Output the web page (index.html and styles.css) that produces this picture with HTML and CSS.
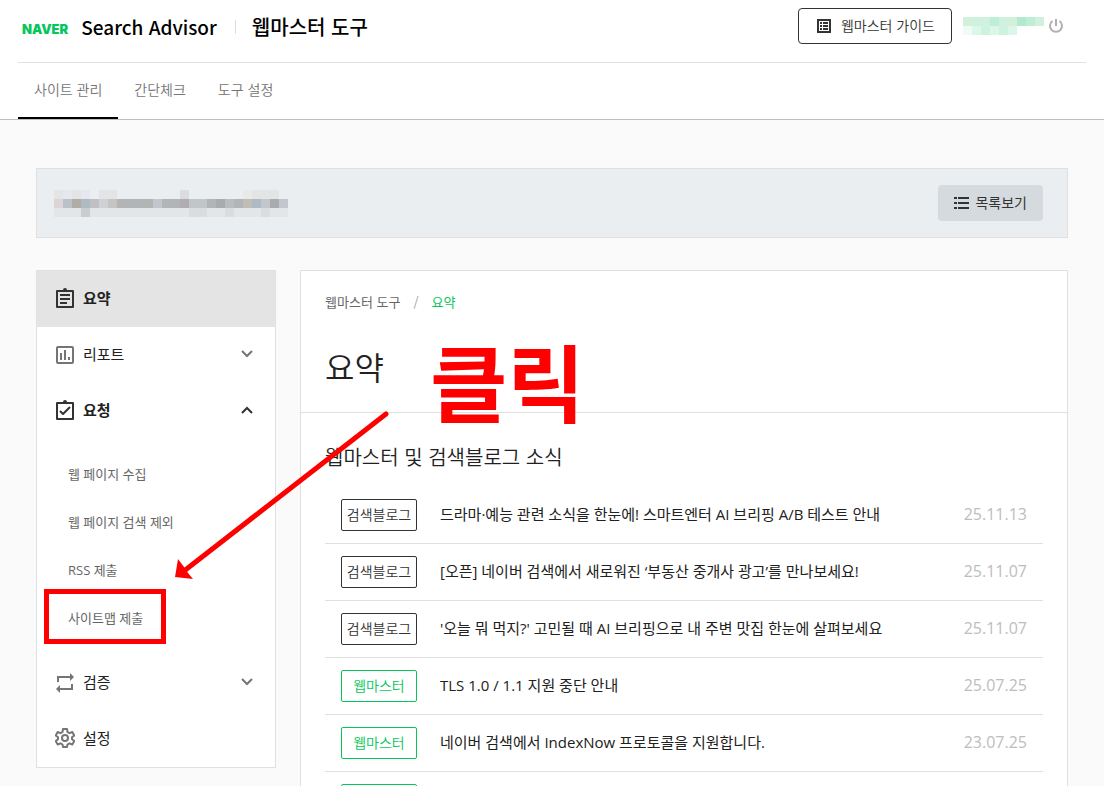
FILE: index.html
```html
<!DOCTYPE html>
<html lang="ko">
<head>
    <meta charset="UTF-8">
    <meta name="viewport" content="width=device-width, initial-scale=1.0">
    <title>네이버 서치어드바이저</title>
    <link rel="stylesheet" href="styles.css">
</head>
<body>
    <header class="header">
        <div class="header-top">
            <a class="brand" href="#">
                <span class="brand-naver">NAVER</span>
                <span class="brand-name">Search Advisor</span>
            </a>
            <a class="brand-sub" href="#">웹마스터 도구</a>
            <div class="header-right">
                <a class="guide-btn" href="#">
                    <svg width="14" height="14" viewBox="0 0 14 14">
                        <path fill="currentColor" fill-rule="evenodd" d="M0 0h14v14H0zM2 2v10h10V2zM3 3h2v2H3zM6 3h5v2H6zM3 6h2v2H3zM6 6h5v2H6zM3 9h2v2H3zM6 9h5v2H6z"/>
                    </svg>
                    <span>웹마스터 가이드</span>
                </a>
                <svg class="user" width="81" height="18" viewBox="0 0 9 2" shape-rendering="crispEdges">
                    <path fill="#cff1de" d="M0 0h9v1H0z"/>
                    <path fill="#c0edd5" d="M3 0h1v1H3zM7 0h1v1H7z"/>
                    <path fill="#b3e9cc" d="M6 0h1v1H6z"/>
                    <path fill="#d3f0da" d="M0 0h1v1H0zM5 0h1v1H5z"/>
                    <path fill="#f0fbf5" d="M0 1h1v1H0z"/>
                    <path fill="#dcf6e8" d="M1 1h5v1H1z"/>
                    <path fill="#cdf3df" d="M2 1h1v1H2zM4 1h1v1H4z"/>
                </svg>
                <button class="power" type="button" aria-label="로그아웃">
                    <svg width="16" height="16" viewBox="0 0 16 16" fill="none" stroke="#b0b0b0" stroke-width="2">
                        <path d="M8 1v7M4.500 3a6 6 0 1 0 7 0"/>
                    </svg>
                </button>
            </div>
        </div>
        <nav class="tabs">
            <a class="tab active" href="#">사이트 관리</a>
            <a class="tab" href="#">간단체크</a>
            <a class="tab" href="#">도구 설정</a>
        </nav>
    </header>

    <div class="container">
        <div class="site-bar">
            <svg class="site-url" width="234" height="27" viewBox="0 0 26 3" shape-rendering="crispEdges">
                <path fill="#e2e4e6" d="M0 0h1v1H0zM2 0h1v1H2zM5 0h2v1H5zM22 0h3v1H22z"/>
                <path fill="#e5e9ef" d="M1 0h1v1H1zM3 0h1v1H3z"/>
                <path fill="#dadcdf" d="M14 0h1v1H14z"/>
                <path fill="#e9e9e6" d="M21 0h1v1H21z"/>
                <path fill="#b2b4b5" d="M7 1h19v1H7z"/>
                <path fill="#ddd5d5" d="M0 1h1v1H0z"/>
                <path fill="#b8c2c7" d="M1 1h1v1H1z"/>
                <path fill="#b3aca6" d="M2 1h1v1H2z"/>
                <path fill="#afbac5" d="M3 1h1v1H3zM22 1h1v1H22z"/>
                <path fill="#c0c0c3" d="M4 1h1v1H4z"/>
                <path fill="#ced2d6" d="M5 1h1v1H5z"/>
                <path fill="#c5c4c3" d="M6 1h1v1H6z"/>
                <path fill="#c3c7cd" d="M11 1h1v1H11zM23 1h1v1H23zM25 1h1v1H25z"/>
                <path fill="#b1acb4" d="M14 1h1v1H14z"/>
                <path fill="#c1c7c6" d="M15 1h2v1H15z"/>
                <path fill="#a8acae" d="M18 1h1v1H18zM24 1h1v1H24z"/>
                <path fill="#b8bdbd" d="M19 1h1v1H19z"/>
                <path fill="#c0bdb8" d="M21 1h1v1H21z"/>
                <path fill="#e3e5e7" d="M0 2h26v1H0z"/>
                <path fill="#cacdce" d="M3 2h1v1H3z"/>
                <path fill="#d9dddd" d="M15 2h2v1H15zM19 2h1v1H19zM23 2h1v1H23z"/>
            </svg>
            <button class="list-btn" type="button">
                <svg width="15" height="12" viewBox="0 0 15 12" fill="currentColor">
                    <path d="M0 0h3v2H0zM4 0h11v2H4zM0 5h3v2H0zM4 5h11v2H4zM0 10h3v2H0zM4 10h11v2H4z"/>
                </svg>
                <span>목록보기</span>
            </button>
        </div>

        <div class="content">
            <aside class="sidebar">
                <a class="menu-item selected" href="#">
                    <svg class="icon" viewBox="0 0 20 22" fill="none" stroke="currentColor" stroke-width="2" stroke-linejoin="round">
                        <path d="M2 4h16v16H2z"/>
                        <path d="M5 8h10M5 12h10M5 16h7"/>
                        <path fill="currentColor" stroke="none" d="M6 3h2a2 2 0 0 1 4 0h2v2H6z"/>
                    </svg>
                    <span>요약</span>
                </a>
                <a class="menu-item" href="#">
                    <svg class="icon" viewBox="0 0 20 22" fill="none" stroke="currentColor" stroke-width="2">
                        <rect x="2" y="4" width="16" height="16" rx="1"/>
                        <path d="M6 10v7M10 7v10M14 14v3"/>
                    </svg>
                    <span>리포트</span>
                    <svg class="arrow" viewBox="0 0 12 8"><path d="M1 1l5 5 5-5"/></svg>
                </a>
                <a class="menu-item open" href="#">
                    <svg class="icon" viewBox="0 0 20 22" fill="none" stroke="currentColor" stroke-width="2" stroke-linejoin="round">
                        <path d="M2 4h16v16H2z"/>
                        <path d="M5 12l3 3 7-7"/>
                        <path fill="currentColor" stroke="none" d="M6 3h2a2 2 0 0 1 4 0h2v2H6z"/>
                    </svg>
                    <span>요청</span>
                    <svg class="arrow" viewBox="0 0 12 8"><path d="M1 7l5-5 5 5"/></svg>
                </a>
                <ul class="submenu">
                    <li><a href="#">웹 페이지 수집</a></li>
                    <li><a href="#">웹 페이지 검색 제외</a></li>
                    <li><a href="#">RSS 제출</a></li>
                    <li><a href="#">사이트맵 제출</a></li>
                </ul>
                <a class="menu-item" href="#">
                    <svg class="icon" viewBox="0 0 20 22" fill="none" stroke="currentColor" stroke-width="2">
                        <path d="M3 11V6h13M17 13v5H4"/>
                        <path fill="currentColor" stroke="none" d="M15 2l4 4-4 4zM5 14l-4 4 4 4z"/>
                    </svg>
                    <span>검증</span>
                    <svg class="arrow" viewBox="0 0 12 8"><path d="M1 1l5 5 5-5"/></svg>
                </a>
                <a class="menu-item" href="#">
                    <svg class="icon" viewBox="0 0 20 22" fill="none" stroke="currentColor" stroke-width="2" stroke-linejoin="round">
                        <path d="M8 2h4l.5 3 2 1.200 2.800-1.200 2 3.500L17 10.300v2l2.300 1.700-2 3.500-2.800-1.200-2 1.200L12 20H8l-.5-2.500-2-1.200-2.800 1.200-2-3.500L3 12.300v-2L.7 8.500l2-3.500 2.800 1.200 2-1.200z"/>
                        <circle cx="10" cy="11" r="3"/>
                    </svg>
                    <span>설정</span>
                </a>
            </aside>

            <main class="panel">
                <div class="panel-head">
                    <div class="breadcrumb">
                        <a href="#">웹마스터 도구</a>
                        <span class="slash">/</span>
                        <a class="current" href="#">요약</a>
                    </div>
                    <h1>요약</h1>
                </div>
                <section class="news">
                    <h2>웹마스터 및 검색블로그 소식</h2>
                    <ul class="news-list">
                        <li>
                            <span class="tag">검색블로그</span>
                            <a href="#">드라마·예능 관련 소식을 한눈에! 스마트엔터 AI 브리핑 A/B 테스트 안내</a>
                            <span class="date">25.11.13</span>
                        </li>
                        <li>
                            <span class="tag">검색블로그</span>
                            <a href="#">[오픈] 네이버 검색에서 새로워진 ‘부동산 중개사 광고’를 만나보세요!</a>
                            <span class="date">25.11.07</span>
                        </li>
                        <li>
                            <span class="tag">검색블로그</span>
                            <a href="#">'오늘 뭐 먹지?' 고민될 때 AI 브리핑으로 내 주변 맛집 한눈에 살펴보세요</a>
                            <span class="date">25.11.07</span>
                        </li>
                        <li>
                            <span class="tag green">웹마스터</span>
                            <a href="#">TLS 1.0 / 1.1 지원 중단 안내</a>
                            <span class="date">25.07.25</span>
                        </li>
                        <li>
                            <span class="tag green">웹마스터</span>
                            <a href="#">네이버 검색에서 IndexNow 프로토콜을 지원합니다.</a>
                            <span class="date">23.07.25</span>
                        </li>
                        <li>
                            <span class="tag green"></span>
                        </li>
                    </ul>
                </section>
            </main>
        </div>
    </div>

    <!-- red callout drawn over the page -->
    <svg class="callout" width="400" height="660" viewBox="0 0 400 660">
        <path fill="none" stroke="#f00" stroke-width="5" stroke-linecap="round" d="M386 414L184 571"/>
        <path fill="#f00" d="M175 577l3-18 6 8 4 6 5 6z"/>
        <rect x="46.500" y="591.500" width="117" height="50" fill="none" stroke="#f00" stroke-width="5"/>
    </svg>
    <strong class="callout-text">클릭</strong>
</body>
</html>
```

FILE: styles.css
```css
* {
    box-sizing: border-box;
}

body {
    margin: 0;
    height: 100vh;
    overflow: hidden;
    position: relative;
    background-color: #fafafa;
    color: #212121;
    font-family: "Noto Sans CJK KR", "Noto Sans", sans-serif;
    font-size: 14px;
    line-height: 20px;
}

a {
    color: inherit;
    text-decoration: none;
}

ul {
    list-style: none;
    margin: 0;
    padding: 0;
}

button {
    font: inherit;
    color: inherit;
    border: none;
    background: none;
    padding: 0;
    cursor: pointer;
}

svg {
    display: block;
    flex-shrink: 0;
}

/* header */
.header {
    background-color: #fff;
    border-bottom: 1px solid #bdbdbd;
    padding: 0 18px;
}

.header-top {
    display: flex;
    align-items: center;
    height: 63px;
    padding-bottom: 10px;
    border-bottom: 1px solid #e0e0e0;
}

.brand {
    display: flex;
    align-items: center;
    gap: 13px;
    padding: 2px 18px 0 4px;
}

.brand-naver {
    color: #03c75a;
    font-family: Inter, sans-serif;
    font-size: 13px;
    font-weight: 900;
    padding-top: 4px;
}

.brand-name,
.brand-sub {
    color: #000;
    font-weight: 500;
    line-height: 24px;
}

.brand-name {
    font-size: 19px;
}

.brand-sub {
    display: flex;
    align-items: center;
    gap: 16px;
    padding-top: 2px;
    font-size: 20px;
}

.brand-sub::before {
    content: "";
    width: 1px;
    height: 14px;
    background-color: #ddd;
}

.header-right {
    display: flex;
    align-items: center;
    margin-left: auto;
    padding-right: 22px;
}

.guide-btn {
    display: flex;
    align-items: center;
    gap: 10px;
    height: 36px;
    padding: 0 16px 0 18px;
    border: 1px solid #333;
    border-radius: 4px;
    color: #333;
    font-weight: 350;
}

.guide-btn span,
.list-btn span {
    padding-bottom: 2px;
}

.user {
    margin: 0 4px 0 11px;
}

/* tabs */
.tabs {
    display: flex;
}

.tab {
    height: 56px;
    padding: 16px 16px 0;
    color: #757575;
    font-weight: 350;
}

.tab.active {
    border-bottom: 2px solid #000;
}

/* site bar */
.container {
    padding: 48px 36px 0;
}

.site-bar {
    display: flex;
    align-items: center;
    justify-content: space-between;
    height: 70px;
    padding: 0 24px 0 17px;
    background-color: #eaeef1;
    border: 1px solid #e0e0e0;
}

.list-btn {
    display: flex;
    align-items: center;
    gap: 6px;
    height: 36px;
    padding: 0 16px;
    border-radius: 4px;
    background-color: #d5dade;
    color: #333;
}

/* sidebar */
.content {
    display: flex;
    align-items: flex-start;
    gap: 24px;
    margin-top: 32px;
}

.sidebar {
    flex: 0 0 240px;
    background-color: #fff;
    border: 1px solid #e0e0e0;
}

.menu-item {
    display: flex;
    align-items: center;
    height: 56px;
    padding: 0 22px 2px 18px;
    font-size: 15px;
}

.menu-item .icon {
    width: 20px;
    height: 22px;
    margin-right: 8px;
    color: #757575;
}

.menu-item .arrow {
    width: 12px;
    height: 8px;
    margin-left: auto;
    fill: none;
    stroke: #757575;
    stroke-width: 2;
}

.menu-item.selected {
    background-color: #e4e4e4;
}

.menu-item.selected,
.menu-item.open {
    font-weight: 700;
}

.menu-item.selected .icon,
.menu-item.open .icon {
    color: #333;
}

.menu-item.open .arrow {
    stroke: #333;
}

.submenu {
    padding: 12px 0;
}

.submenu a {
    display: block;
    padding: 13px 31px 15px;
    color: #666;
    font-family: "Open Sans", "Noto Sans CJK KR", sans-serif;
    font-size: 13px;
}

/* main panel */
.panel {
    flex: 1;
    background-color: #fff;
    border: 1px solid #e0e0e0;
}

.panel-head {
    padding: 21px 24px 24px;
    border-bottom: 1px solid #e0e0e0;
}

.breadcrumb {
    display: flex;
    gap: 13px;
    color: #666;
    font-size: 13px;
}

.breadcrumb .slash {
    color: #9e9e9e;
}

.breadcrumb .current {
    color: #03c75a;
}

h1 {
    margin: 32px 0 0;
    font-size: 32px;
    font-weight: 350;
    line-height: 44px;
}

.news {
    padding: 30px 24px;
}

h2 {
    margin: 0 0 16px;
    font-size: 20px;
    font-weight: 350;
    line-height: 28px;
}

.news-list li {
    display: flex;
    align-items: center;
    height: 57px;
    padding: 0 16px;
    border-bottom: 1px solid #e0e0e0;
}

.news-list a,
.date {
    padding-bottom: 3px;
    font-family: "Open Sans", "Noto Sans CJK KR", sans-serif;
}

.news-list a {
    font-size: 15px;
}

.tag {
    width: 76px;
    height: 32px;
    margin-right: 23px;
    border: 1px solid #333;
    border-radius: 2px;
    color: #333;
    font-weight: 350;
    line-height: 28px;
    text-align: center;
}

.tag.green {
    border-color: #03c75a;
    color: #03c75a;
}

.date {
    margin-left: auto;
    color: #bdbdbd;
    font-size: 16px;
}

/* callout */
.callout {
    position: absolute;
    top: 0;
    left: 0;
    pointer-events: none;
}

.callout-text {
    position: absolute;
    top: 336px;
    left: 430px;
    color: #f00;
    font-size: 84px;
    font-weight: 700;
    line-height: 88px;
}
```
